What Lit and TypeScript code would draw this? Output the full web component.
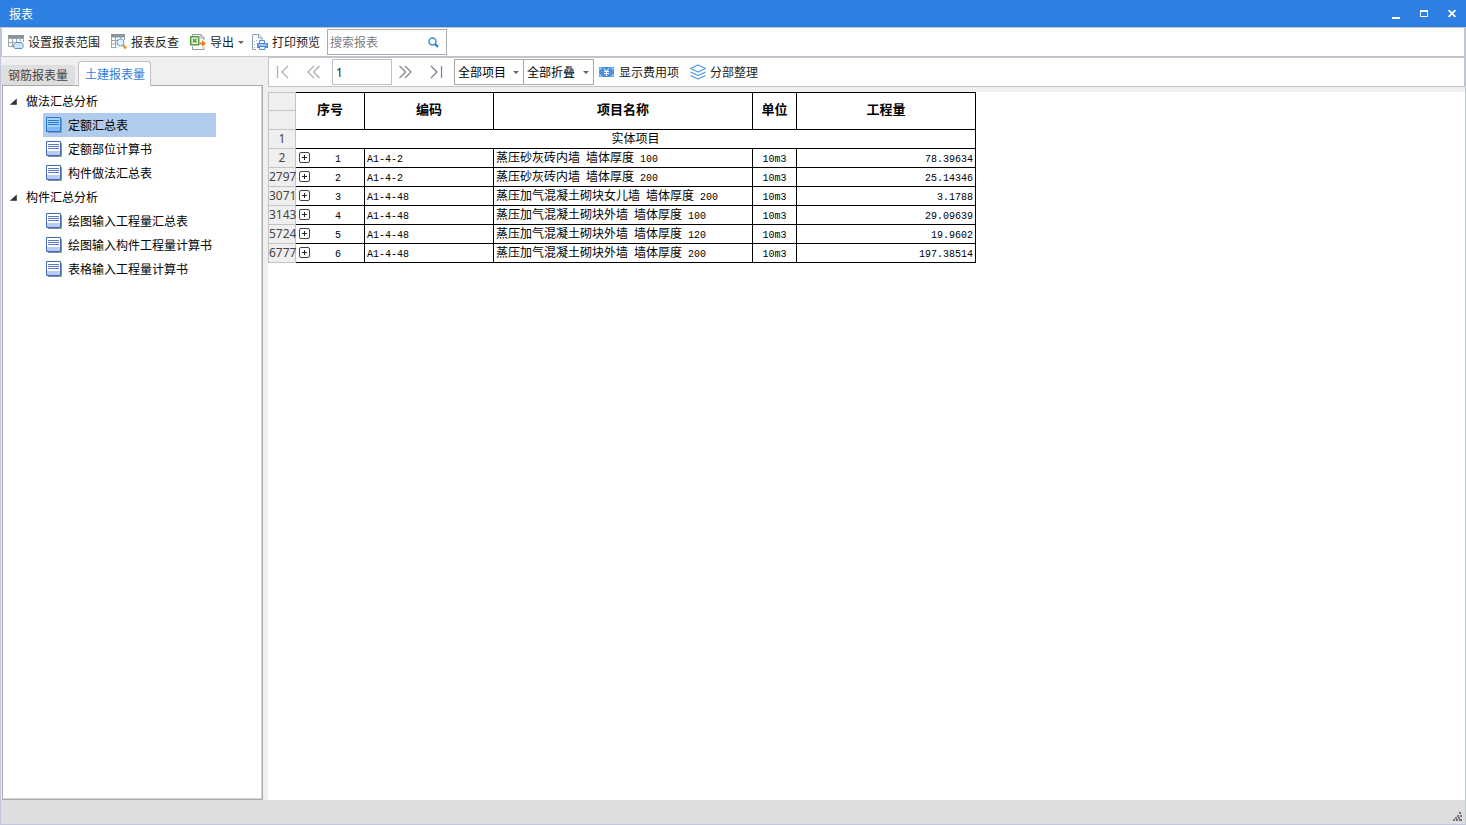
import { LitElement, html, css, svg, nothing } from "lit";
import { customElement, state } from "lit/decorators.js";
import { classMap } from "lit/directives/class-map.js";

interface ReportRow {
  line: number;
  no: number;
  code: string;
  name: string;
  thickness: string;
  unit: string;
  amount: string;
}

const ROWS: ReportRow[] = [
  { line: 2, no: 1, code: "A1-4-2", name: "蒸压砂灰砖内墙", thickness: "100", unit: "10m3", amount: "78.39634" },
  { line: 2797, no: 2, code: "A1-4-2", name: "蒸压砂灰砖内墙", thickness: "200", unit: "10m3", amount: "25.14346" },
  { line: 3071, no: 3, code: "A1-4-48", name: "蒸压加气混凝土砌块女儿墙", thickness: "200", unit: "10m3", amount: "3.1788" },
  { line: 3143, no: 4, code: "A1-4-48", name: "蒸压加气混凝土砌块外墙", thickness: "100", unit: "10m3", amount: "29.09639" },
  { line: 5724, no: 5, code: "A1-4-48", name: "蒸压加气混凝土砌块外墙", thickness: "120", unit: "10m3", amount: "19.9602" },
  { line: 6777, no: 6, code: "A1-4-48", name: "蒸压加气混凝土砌块外墙", thickness: "200", unit: "10m3", amount: "197.38514" },
];

const GROUPS = [
  { title: "做法汇总分析", items: ["定额汇总表", "定额部位计算书", "构件做法汇总表"] },
  { title: "构件汇总分析", items: ["绘图输入工程量汇总表", "绘图输入构件工程量计算书", "表格输入工程量计算书"] },
];

const icon = (body: unknown, w = 16, h = 16) =>
  html`<svg class="icon" width=${w} height=${h} viewBox="0 0 ${w} ${h}" aria-hidden="true" fill="none">${body}</svg>`;

const rangeIcon = icon(svg`
  <path d="M0 1h16v3H0z" fill="#87969f"/>
  <path d="M.5 4v8.500h5M.5 8.500h6M4.500 4v8.500M8.500 4v4M12.500 4v3M15.500 4v4M.5 4.500h15" stroke="#9aa5ad"/>
  <path d="M7.500 8.500h6l1.500 2v3l-1 1H7l-1.500-1.500v-2z" fill="#cfe4f8" stroke="#4f93d8"/>
`);
const traceIcon = icon(svg`
  <path d="M0 0h14v3.500H0z" fill="#87969f"/>
  <path d="M.5 3v10.500h5M.5 6.500h6M.5 10h5M4.500 3v10.500M9.500 3v2M13.500 3v3" stroke="#9aa5ad"/>
  <circle cx="9.500" cy="8.500" r="3.500" fill="#e6f1fc" stroke="#5e9bdc"/>
  <path d="M11.500 12l2-1.500 2.500 3-2 2z" fill="#f0962c"/>
`);
const exportIcon = icon(svg`
  <path d="M2.500 2V.5h8.500l3 3V6M11 .5V4h3M2.500 12.500v3h11.500V13" stroke="#8d99a3"/>
  <path d="M.75 2.750h8v8h-8z" fill="#eef7e9" stroke="#5a9e42" stroke-width="1.500"/>
  <path d="M3 5l3.500 3.500M6.500 5L3 8.500" stroke="#4f9a34" stroke-width="1.500"/>
  <path d="M9.500 8.500H12V6l4 3.500-4 3.500v-2.500H9.500z" fill="#f07c22"/>
`);
const printIcon = icon(svg`
  <path d="M4 15.500H.5V.5H7l3 3V6M6.500 .5V4H10" stroke="#8fa0b0"/>
  <path d="M2.500 7v1M2.500 10v1M2.500 13v1M4.500 6v1" stroke="#9aa5ad"/>
  <path d="M7.500 9V6.500h5V9" fill="#fff" stroke="#4a8de0"/>
  <path d="M5 9h11v5H5z" fill="#4a8de0"/>
  <path d="M6.500 11h8" stroke="#fff"/>
  <path d="M7.500 12.500h5.500v3H7.500z" fill="#fff" stroke="#4a8de0"/>
`);
const feeIcon = icon(svg`
  <path d="M0 3h15v10H0z" fill="#4a90e2"/>
  <path d="M1 6V4h2M12 4h2v2M14 10v2h-2M3 12H1v-2" stroke="#b9d6f6"/>
  <path d="M5 4.500l2.500 3 2.500-3M7.500 7.500V12M5 7.500h5M5 9.500h5" stroke="#fff"/>
`);
const layersIcon = icon(svg`
  <path d="M8 1l7.500 3.500L8 8 .5 4.500zM.5 8L8 11.500 15.500 8M.5 11.500L8 15l7.500-3.500" stroke="#4f97e3" stroke-width="1.200" stroke-linejoin="round"/>
`);
const sheetIcon = (selected: boolean) => icon(svg`
  <path d="M2 15.500h13.500V2" stroke="#8a92a8"/>
  <path d="M.5.500h14v14H.5z" fill=${selected ? "#a9d2fb" : "#fff"} stroke=${selected ? "#2a78d6" : "#4468b8"}/>
  <path d="M1 10h13v4H1z" fill=${selected ? "#7fb8f8" : "#b8ccfb"}/>
  <path d="M2 3.500h11M2 5.500h11M2 7.500h11" stroke=${selected ? "#2a78d6" : "#5b78c0"}/>
`);
const caret = icon(svg`<path d="M0 1h6L3 4z" fill="#666"/>`, 6, 5);

const pagerIcons = {
  first: icon(svg`<path d="M1.500 1v12M12 1L6 7l6 6" stroke="#a8acb0" stroke-width="1.200"/>`, 14, 14),
  prev: icon(svg`<path d="M7 1L1 7l6 6M12.500 1l-6 6 6 6" stroke="#a8acb0" stroke-width="1.200"/>`, 14, 14),
  next: icon(svg`<path d="M1.500 1l6 6-6 6M7 1l6 6-6 6" stroke="#808488" stroke-width="1.200"/>`, 14, 14),
  last: icon(svg`<path d="M2 1l6 6-6 6M12.500 1v12" stroke="#6f7f90" stroke-width="1.200"/>`, 14, 14),
};

@customElement("app-root")
export class AppRoot extends LitElement {
  static styles = css`
    :host {
      display: block;
      font: 12px/18px "Noto Sans CJK SC", sans-serif;
      color: #000;
    }
    * { box-sizing: border-box; }
    button, input, select { font: inherit; color: inherit; margin: 0; }
    button { border: 0; padding: 0; background: none; }
    .icon { display: block; flex: none; }
    .window {
      display: flex; flex-direction: column; height: 100vh;
      border: solid #bfc7d8; border-width: 0 1px 1px; background: #efefef;
    }
    .titlebar {
      display: flex; justify-content: space-between; align-items: center;
      height: 27px; margin: 0 -1px; padding: 0 6px 0 9px;
      background: #2d80e2; color: #fff; flex: none;
    }
    .title { font-size: 12px; font-weight: 400; margin: 0; }
    .window-buttons { display: flex; gap: 12px; }
    .window-button { display: grid; place-items: center; width: 16px; height: 16px; }
    .toolbar {
      display: flex; align-items: center; gap: 3px; height: 30px; padding: 0 2px;
      border: 1px solid #c1c5cb; background: #fff; flex: none;
    }
    .tool {
      display: flex; align-items: center; gap: 4px; height: 22px; padding: 0 4px;
      border-radius: 3px; color: #222; white-space: nowrap;
    }
    .tool.drop { padding-right: 1px; }
    .search {
      display: flex; align-items: center; width: 120px; height: 26px;
      padding: 0 7px 0 2px; border: 1px solid #ababab; background: #fff;
    }
    .search-input { flex: 1; min-width: 0; padding: 0; border: 0; outline: 0; background: none; }
    .search-input::placeholder { color: #808080; opacity: 1; }
    .body { display: flex; flex: 1; min-height: 0; gap: 5px; }
    .sidebar { display: flex; flex-direction: column; width: 262px; flex: none; }
    .tabs { display: flex; align-items: flex-end; gap: 3px; height: 28px; flex: none; }
    .tab {
      height: 20px; padding: 0 7px; background: #dedede; color: #444;
      border-radius: 3px 3px 0 0;
    }
    .tab.active {
      height: 25px; margin-bottom: -1px; padding: 0 5px 0 6px; background: #fff; color: #2d80e2;
      border: 1px solid #bfc1c6; border-bottom: 0; z-index: 1;
    }
    .tree {
      flex: 1; margin-left: 1px; padding-top: 3px; background: #fff;
      border: 1px solid #a9aaae; box-shadow: inset -1px -1px #d5d6dc;
    }
    .groups { width: fit-content; margin: 0; padding: 0; list-style: none; }
    .group-title { display: flex; align-items: center; gap: 9px; height: 24px; padding-left: 7px; }
    .items { list-style: none; margin: 0 0 0 40px; padding: 0; }
    .leaf {
      display: flex; align-items: center; gap: 6px; width: 100%; height: 24px;
      padding: 0 4px 0 3px; white-space: nowrap;
    }
    .leaf.selected { background: #b1cbec; }
    .main { display: flex; flex-direction: column; flex: 1; min-width: 0; }
    .pager {
      display: flex; align-items: center; height: 30px; padding-left: 1px;
      border: 1px solid #c1c5cb; background: #fff; flex: none;
    }
    .page-button { display: grid; place-items: center; width: 31px; height: 22px; padding-right: 6px; }
    .page-input {
      width: 60px; height: 26px; padding: 0 3px; border: 1px solid #bfc3c9; outline: 0;
      background: #fff; color: #222; font-family: "Noto Sans", sans-serif;
    }
    .combo { display: grid; align-items: center; width: 71px; }
    .combo.short { width: 70px; margin-right: -1px; }
    .combo-select, .combo > .icon { grid-area: 1 / 1; }
    .combo > .icon { justify-self: end; margin-right: 5px; pointer-events: none; }
    .combo-select {
      appearance: none; width: 100%; height: 26px; padding: 0 3px;
      border: 1px solid #a8a8a8; border-radius: 0; background: #fff;
    }
    .extra { display: flex; gap: 3px; padding-left: 1px; }
    .sheet { flex: 1; margin-top: 5px; background: #fff; overflow: auto; }
    .grid {
      table-layout: fixed; width: 708px; border-collapse: separate; border-spacing: 0;
      font: 12px/14px "Noto Sans CJK SC", sans-serif;
    }
    .c-line { width: 28px; }
    .c-no { width: 69px; }
    .c-code { width: 129px; }
    .c-name { width: 259px; }
    .c-unit { width: 44px; }
    .grid tr { height: 19px; }
    .cell { padding: 0 2px 2px; border: solid #000; border-width: 0 1px 1px 0; height: 19px; white-space: nowrap; }
    .head { padding-bottom: 4px; border-top-width: 1px; font-size: 13px; font-weight: 700; text-align: center; }
    .line {
      padding: 0; border: solid #c4c4c4; border-width: 0 1px 1px; height: 19px;
      background: #efefef; color: #444; text-align: center; white-space: nowrap;
      font: 12px/16px "Noto Sans", sans-serif;
    }
    .line.top { border-top-width: 1px; }
    .num { font: 10px/8px "Liberation Mono", monospace; white-space: pre; }
    .center { text-align: center; }
    .right { text-align: right; }
    .no { display: grid; grid-template-columns: 16px 1fr; align-items: center; text-align: center; }
    .status { display: flex; justify-content: flex-end; align-items: flex-end; height: 24px; padding: 3px; background: #dededf; flex: none; }
  `;

  @state() private selected = "定额汇总表";
  @state() private tab = "土建报表量";

  private renderTab(name: string) {
    const active = this.tab === name;
    return html`<button role="tab" aria-selected=${active} class=${classMap({ tab: true, active })}
      @click=${() => (this.tab = name)}>${name}</button>`;
  }

  private renderRow(r: ReportRow) {
    return html`<tr>
      <th class="line" scope="row">${r.line}</th>
      <td class="cell"><div class="no">
        <button aria-label="展开">${icon(svg`
          <rect x="1.500" y=".5" width="10" height="10" rx="1.500" stroke="#444"/>
          <path d="M4 5.500h5M6.500 3v5" stroke="#222"/>`, 12, 11)}</button>
        <div><span class="num">${r.no}</span></div></div></td>
      <td class="cell"><span class="num">${r.code}</span></td>
      <td class="cell">${r.name}<span class="num"> </span>墙体厚度<span class="num"> ${r.thickness}</span></td>
      <td class="cell center"><span class="num">${r.unit}</span></td>
      <td class="cell right"><span class="num">${r.amount}</span></td>
    </tr>`;
  }

  render() {
    return html`<div class="window">
      <header class="titlebar">
        <h1 class="title">报表</h1>
        <div class="window-buttons">
          <button class="window-button" aria-label="最小化">${icon(svg`<path d="M0 9h8" stroke="#fff" stroke-width="2"/>`, 8, 10)}</button>
          <button class="window-button" aria-label="最大化">${icon(svg`<path d="M.5 1v5.500h7V1" stroke="#fff"/><path d="M0 1h8" stroke="#fff" stroke-width="2"/>`, 8, 7)}</button>
          <button class="window-button" aria-label="关闭">${icon(svg`<path d="M.5 0l7 7M7.500 0l-7 7" stroke="#fff" stroke-width="1.800"/>`, 8, 7)}</button>
        </div>
      </header>
      <nav class="toolbar">
        <button class="tool">${rangeIcon}设置报表范围</button>
        <button class="tool">${traceIcon}报表反查</button>
        <button class="tool drop">${exportIcon}导出${caret}</button>
        <button class="tool">${printIcon}打印预览</button>
        <div class="search">
          <input class="search-input" type="text" aria-label="搜索报表" placeholder="搜索报表" />
          ${icon(svg`<circle cx="4.500" cy="4.500" r="3.500" stroke="#3a94d0" stroke-width="1.500"/><path d="M7 7l3 3" stroke="#2a7cb8" stroke-width="2"/>`, 11, 11)}
        </div>
      </nav>
      <div class="body">
        <aside class="sidebar">
          <div class="tabs" role="tablist">${this.renderTab("钢筋报表量")}${this.renderTab("土建报表量")}</div>
          <div class="tree"><ul class="groups">
            ${GROUPS.map((g) => html`<li>
              <div class="group-title">${icon(svg`<path d="M6.500 1v5.500H.5z" fill="#333" stroke="#222" stroke-width=".5"/>`, 7, 7)}${g.title}</div>
              <ul class="items">${g.items.map((name) => html`<li>
                <button class=${classMap({ leaf: true, selected: this.selected === name })}
                  aria-current=${this.selected === name ? "true" : nothing}
                  @click=${() => (this.selected = name)}>${sheetIcon(this.selected === name)}${name}</button>
              </li>`)}</ul>
            </li>`)}
          </ul></div>
        </aside>
        <main class="main">
          <div class="pager">
            <button class="page-button" aria-label="首页">${pagerIcons.first}</button>
            <button class="page-button" aria-label="上一页">${pagerIcons.prev}</button>
            <input class="page-input" type="text" aria-label="页码" .value=${"1"} />
            <button class="page-button" aria-label="下一页">${pagerIcons.next}</button>
            <button class="page-button" aria-label="末页">${pagerIcons.last}</button>
            <div class="combo short"><select class="combo-select" aria-label="项目范围"><option>全部项目</option></select>${caret}</div>
            <div class="combo"><select class="combo-select" aria-label="折叠方式"><option>全部折叠</option></select>${caret}</div>
            <div class="extra">
              <button class="tool">${feeIcon}显示费用项</button>
              <button class="tool">${layersIcon}分部整理</button>
            </div>
          </div>
          <div class="sheet">
            <table class="grid">
              <colgroup><col class="c-line" /><col class="c-no" /><col class="c-code" /><col class="c-name" /><col class="c-unit" /><col /></colgroup>
              <thead>
                <tr>
                  <td class="line top"></td>
                  ${["序号", "编码", "项目名称", "单位", "工程量"].map((h) => html`<th class="cell head" rowspan="2" scope="col">${h}</th>`)}
                </tr>
                <tr><td class="line"></td></tr>
              </thead>
              <tbody>
                <tr><th class="line" scope="row">1</th><td class="cell center" colspan="5">实体项目</td></tr>
                ${ROWS.map((r) => this.renderRow(r))}
              </tbody>
            </table>
          </div>
        </main>
      </div>
      <footer class="status">
        ${icon(svg`<path d="M6 0h2v2H6zM4 3h2v2H4zM7 3h2v2H7zM2 5h2v2H2zM5 5h2v2H5zM0 7h2v2H0zM3 7h2v2H3zM6 7h3v2H6z" fill="#6b747c"/>`, 9, 9)}
      </footer>
    </div>`;
  }
}
